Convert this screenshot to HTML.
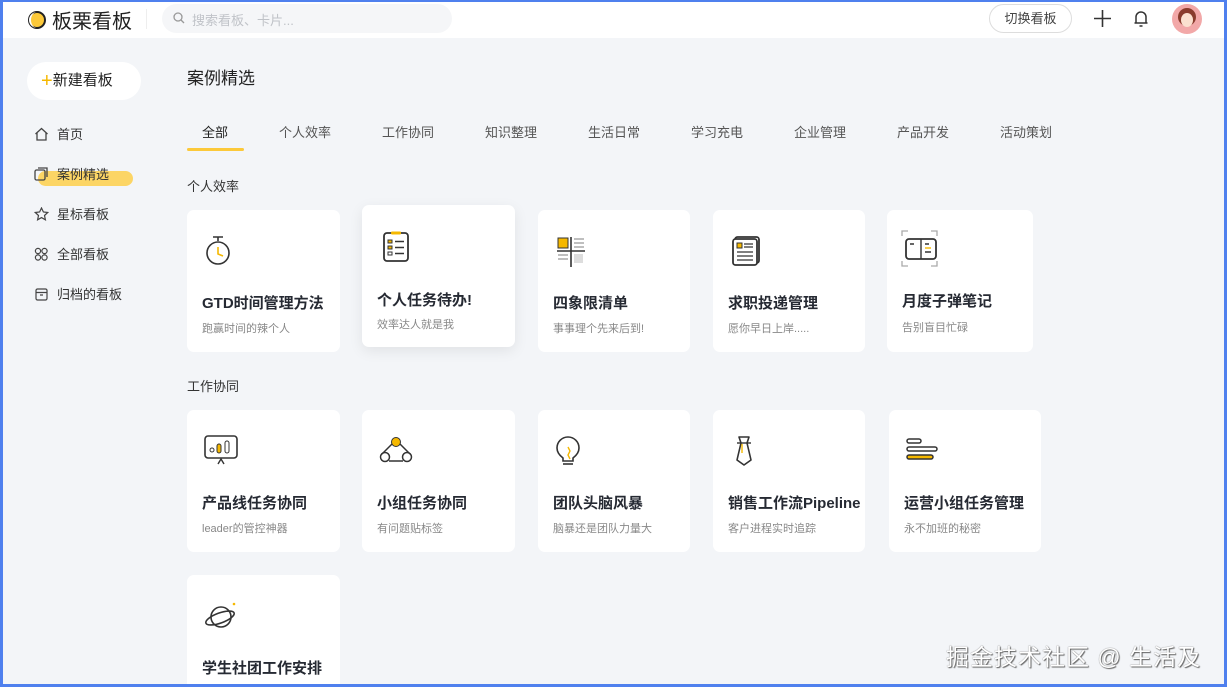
<!DOCTYPE html>
<html><head><meta charset="utf-8"><style>
*{box-sizing:border-box;margin:0;padding:0}
html{width:1227px;height:687px;overflow:hidden}
body{width:1227px;height:687px;overflow:hidden;background:#f3f5f8;font-family:"Liberation Sans","Noto Sans CJK SC",sans-serif;color:#262a33;position:relative}
.frame{position:absolute;left:0;top:0;width:1227px;height:687px;border:3px solid #4f80ee;border-top-width:2px;pointer-events:none;z-index:10}
.hdr{position:absolute;left:0;top:0;width:1227px;height:38px;background:#fff}
.logo{position:absolute;left:27px;top:5px;font-size:20px;color:#222;display:flex;align-items:center;gap:5px}
.sep{position:absolute;left:146px;top:9px;width:1px;height:20px;background:#eee}
.search{position:absolute;left:162px;top:4px;width:290px;height:29px;border-radius:15px;background:#f5f6f8;font-size:13px;color:#c0c3c8;padding:6px 0 0 30px}
.switch{position:absolute;left:989px;top:4px;width:83px;height:29px;border:1px solid #ddd;border-radius:15px;font-size:13px;color:#444;text-align:center;line-height:27px}
.av{position:absolute;left:1172px;top:4px;width:30px;height:30px;border-radius:50%;background:#f2a8a8;overflow:hidden}
.newb{position:absolute;left:27px;top:62px;width:114px;height:38px;background:#fff;border-radius:19px;font-size:15px;line-height:38px;padding-left:14px;color:#222}
.nav{position:absolute;left:34px;font-size:13px;color:#333;display:flex;align-items:center;gap:8px}
.hl{position:absolute;left:38px;top:171px;width:95px;height:15px;background:#fcd565;border-radius:8px}
h1{position:absolute;left:187px;top:64px;font-size:17px;font-weight:normal;color:#222}
.tab{position:absolute;top:122px;font-size:13px;color:#555}
.ul{position:absolute;left:187px;top:148px;width:57px;height:3px;background:#fcc93a;border-radius:2px}
.sec{position:absolute;left:187px;font-size:13px;color:#333}
.card{position:absolute;background:#fff;border-radius:7px;width:153px;height:142px}
.card svg{position:absolute;left:17px;top:25px}
.card .t{position:absolute;left:15px;top:82px;font-size:15px;font-weight:bold;color:#262a33;white-space:nowrap}
.card .s{position:absolute;left:15px;top:110px;font-size:11px;color:#888;white-space:nowrap}
.wm{position:absolute;left:946px;top:638px;font-size:23px;color:#fff;text-shadow:0 0 1px #555,1px 1px 1px #666;letter-spacing:1px}
</style></head><body>
<div class="hdr"></div>
<div class="logo"><svg width="20" height="20" viewBox="0 0 20 20"><circle cx="10" cy="10" r="8" fill="#fcc93a" stroke="#222" stroke-width="2"/><path d="M10 2a8 8 0 0 0 0 16a6 8 0 0 1 0-16z" fill="#fff"/></svg>板栗看板</div>
<div class="sep"></div>
<div class="search"><svg style="position:absolute;left:11px;top:8px" width="12" height="12" viewBox="0 0 12 12"><circle cx="5" cy="5" r="4" fill="none" stroke="#999" stroke-width="1.3"/><path d="M8 8l3 3" stroke="#999" stroke-width="1.3"/></svg>搜索看板、卡片...</div>
<div class="switch">切换看板</div>
<svg style="position:absolute;left:1094px;top:10px" width="17" height="17"><path d="M8.5 0v17M0 8.5h17" stroke="#333" stroke-width="1.6"/></svg>
<svg style="position:absolute;left:1133px;top:9px" width="16" height="19" viewBox="0 0 16 19"><path d="M3 14V8a5 5 0 0 1 10 0v6h1.5H1.5M6.5 17h3" fill="none" stroke="#333" stroke-width="1.5"/></svg>
<div class="av"><svg width="30" height="30"><circle cx="15" cy="13" r="9" fill="#8a3b2c"/><ellipse cx="15" cy="16" rx="6" ry="7" fill="#fbe0cf"/></svg></div>

<div class="newb"><span style="color:#f5b800;font-size:20px;vertical-align:-2px">+</span>新建看板</div>
<div class="nav" style="top:124px"><svg width="15" height="14"><path d="M1.5 7L7.5 1.5 13.5 7M3 6v7h9V6" fill="none" stroke="#444" stroke-width="1.3"/></svg>首页</div>
<div class="hl"></div>
<div class="nav" style="top:164px"><svg width="15" height="14"><rect x="1" y="3" width="10" height="10" rx="1.5" fill="none" stroke="#444" stroke-width="1.3"/><path d="M4 1h9v9" fill="none" stroke="#444" stroke-width="1.3"/></svg>案例精选</div>
<div class="nav" style="top:204px"><svg width="15" height="14"><path d="M7.5 1l1.9 4 4.3.5-3.2 3 .9 4.3-3.900-2.2-3.9 2.2.9-4.3-3.2-3 4.3-.5z" fill="none" stroke="#444" stroke-width="1.2"/></svg>星标看板</div>
<div class="nav" style="top:244px"><svg width="15" height="14"><circle cx="4" cy="4" r="2.6" fill="none" stroke="#444" stroke-width="1.2"/><circle cx="10.5" cy="4" r="2.6" fill="none" stroke="#444" stroke-width="1.2"/><circle cx="4" cy="10.5" r="2.6" fill="none" stroke="#444" stroke-width="1.2"/><circle cx="10.5" cy="10.5" r="2.6" fill="none" stroke="#444" stroke-width="1.2"/></svg>全部看板</div>
<div class="nav" style="top:284px"><svg width="15" height="14"><rect x="2" y="2" width="11" height="11" rx="1.5" fill="none" stroke="#444" stroke-width="1.2"/><path d="M2 5.5h11M6 8h3" stroke="#444" stroke-width="1.2"/></svg>归档的看板</div>

<h1>案例精选</h1>
<div class="tab" style="left:202px;color:#222">全部</div>
<div class="tab" style="left:279px">个人效率</div>
<div class="tab" style="left:382px">工作协同</div>
<div class="tab" style="left:485px">知识整理</div>
<div class="tab" style="left:588px">生活日常</div>
<div class="tab" style="left:691px">学习充电</div>
<div class="tab" style="left:794px">企业管理</div>
<div class="tab" style="left:897px">产品开发</div>
<div class="tab" style="left:1000px">活动策划</div>
<div class="ul"></div>
<div class="sec" style="top:176px">个人效率</div>
<div class="sec" style="top:376px">工作协同</div>

<div class="card" style="left:187px;top:210px"><svg width="30" height="32" viewBox="0 0 30 32"><path d="M9 2h10M14 2v4" stroke="#333" stroke-width="1.6"/><circle cx="14" cy="18" r="11" fill="none" stroke="#333" stroke-width="1.6"/><path d="M14 12v7l5 2" fill="none" stroke="#f5b800" stroke-width="1.6"/></svg><div class="t">GTD时间管理方法</div><div class="s">跑赢时间的辣个人</div></div>
<div class="card" style="left:362px;top:205px;box-shadow:0 4px 14px rgba(0,0,0,.08)"><svg width="30" height="32" viewBox="0 0 30 32"><rect x="5" y="3" width="24" height="28" rx="3" fill="none" stroke="#333" stroke-width="1.8"/><rect x="12" y="1.5" width="10" height="3" rx="1" fill="#f5b800"/><rect x="9" y="10" width="4" height="3" fill="#f5b800" stroke="#333"/><rect x="9" y="16" width="4" height="3" fill="#f5b800" stroke="#333"/><rect x="9" y="22" width="4" height="3" fill="none" stroke="#333"/><path d="M16 11.5h9M16 17.5h9M16 23.5h9" stroke="#333" stroke-width="1.6"/></svg><div class="t" style="top:84px">个人任务待办!</div><div class="s" style="top:111px">效率达人就是我</div></div>
<div class="card" style="left:538px;top:210px;width:152px"><svg width="32" height="32" viewBox="0 0 32 32"><rect x="3" y="3" width="10" height="10" fill="#f5b800" stroke="#333"/><path d="M2 16h28M16 2v30" stroke="#333" stroke-width="1.6"/><path d="M19 4h10M19 8h10M19 12h10M3 20h10M3 24h10" stroke="#999" stroke-width="1.2"/><rect x="19" y="19" width="9" height="9" fill="#ddd"/></svg><div class="t">四象限清单</div><div class="s">事事理个先来后到!</div></div>
<div class="card" style="left:713px;top:210px;width:152px"><svg width="32" height="32" viewBox="0 0 32 32"><rect x="5" y="2" width="24" height="26" rx="2.5" fill="#fff" stroke="#333" stroke-width="1.8"/><rect x="3" y="4" width="24" height="26" rx="2.5" fill="#fff" stroke="#333" stroke-width="1.8"/><rect x="7" y="8" width="5" height="5" fill="#f5b800" stroke="#333"/><path d="M14 9h9M14 12h9M7 17h16M7 21h16M7 25h16" stroke="#333" stroke-width="1.3"/></svg><div class="t">求职投递管理</div><div class="s">愿你早日上岸.....</div></div>
<div class="card" style="left:887px;top:210px;width:146px"><svg width="38" height="38" viewBox="0 0 38 38" style="left:14px;top:20px"><path d="M1 6V1h6M30 1h6v5M1 31v5h6M30 36h6v-5" fill="none" stroke="#aaa" stroke-width="1.3"/><rect x="5" y="9" width="30" height="20" rx="3" fill="none" stroke="#333" stroke-width="1.8"/><path d="M20 9v20M9 14h4M24 14h4M24 22h6" stroke="#333" stroke-width="1.4"/><path d="M24 18h6" stroke="#f5b800" stroke-width="1.4"/></svg><div class="t" style="top:80px">月度子弹笔记</div><div class="s" style="top:109px">告别盲目忙碌</div></div>

<div class="card" style="left:187px;top:410px"><svg width="36" height="32" viewBox="0 0 36 32"><rect x="1" y="1" width="32" height="22" rx="3" fill="none" stroke="#333" stroke-width="1.6"/><circle cx="8" cy="15" r="2" fill="none" stroke="#333"/><rect x="13" y="9" width="4" height="9" rx="2" fill="#f5b800" stroke="#333"/><rect x="21" y="6" width="4" height="12" rx="2" fill="none" stroke="#333"/><path d="M14 29l3-5 3 5" fill="none" stroke="#333" stroke-width="1.4"/></svg><div class="t">产品线任务协同</div><div class="s">leader的管控神器</div></div>
<div class="card" style="left:362px;top:410px"><svg width="36" height="32" viewBox="0 0 36 32"><circle cx="17" cy="7" r="4.5" fill="#f5b800" stroke="#333"/><circle cx="6" cy="22" r="4.5" fill="none" stroke="#333" stroke-width="1.5"/><circle cx="28" cy="22" r="4.5" fill="none" stroke="#333" stroke-width="1.5"/><path d="M13 9L3 19M21 9l10 10M10 26h14" fill="none" stroke="#333" stroke-width="1.5"/></svg><div class="t">小组任务协同</div><div class="s">有问题贴标签</div></div>
<div class="card" style="left:538px;top:410px;width:152px"><svg width="30" height="34" viewBox="0 0 30 34"><path d="M8 23c-4-3-6-6-6-10a11 11 0 0 1 22 0c0 4-2 7-6 10v3H8z" fill="none" stroke="#333" stroke-width="1.6"/><path d="M13 12l2 4-2 4 2 4" fill="none" stroke="#f5b800" stroke-width="1.4"/><path d="M8 29h10" stroke="#333" stroke-width="1.6"/></svg><div class="t">团队头脑风暴</div><div class="s">脑暴还是团队力量大</div></div>
<div class="card" style="left:713px;top:410px;width:152px"><svg width="30" height="34" viewBox="0 0 30 34"><path d="M9 2h10l-2 6 4 17-7 5-7-5 4-17z" fill="none" stroke="#333" stroke-width="1.6" stroke-linejoin="round"/><path d="M7 8h14" stroke="#333" stroke-width="1.4"/><path d="M12 9v9" stroke="#f5b800" stroke-width="1.4"/></svg><div class="t">销售工作流Pipeline</div><div class="s">客户进程实时追踪</div></div>
<div class="card" style="left:889px;top:410px;width:152px"><svg width="36" height="32" viewBox="0 0 36 32"><rect x="1" y="4" width="14" height="4" rx="2" fill="none" stroke="#333" stroke-width="1.5"/><rect x="1" y="12" width="30" height="4" rx="2" fill="none" stroke="#333" stroke-width="1.5"/><rect x="1" y="20" width="26" height="4" rx="2" fill="#f5b800" stroke="#333" stroke-width="1.5"/></svg><div class="t">运营小组任务管理</div><div class="s">永不加班的秘密</div></div>

<div class="card" style="left:187px;top:575px;height:112px;border-radius:7px 7px 0 0"><svg width="36" height="32" viewBox="0 0 36 32"><circle cx="17" cy="17" r="10" fill="none" stroke="#333" stroke-width="1.6"/><ellipse cx="16" cy="18" rx="15" ry="5" transform="rotate(-20 16 18)" fill="none" stroke="#333" stroke-width="1.6"/><circle cx="30" cy="4" r="1.3" fill="#f5b800"/></svg><div class="t">学生社团工作安排</div></div>

<div class="wm">掘金技术社区 @ 生活及</div>
<div class="frame"></div>
</body></html>
